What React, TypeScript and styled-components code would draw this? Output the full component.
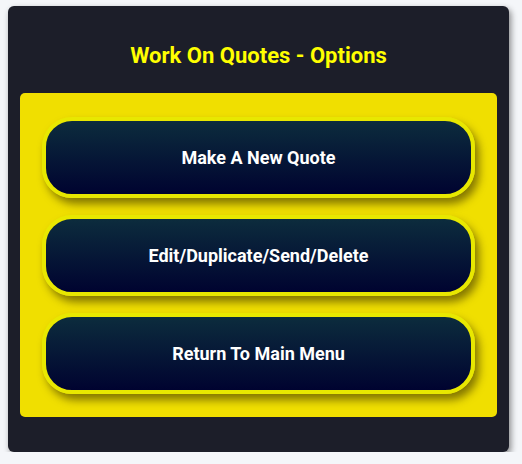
import React from "react";
import styled, { createGlobalStyle } from "styled-components";

const Global = createGlobalStyle`
  html, body {
    margin: 0;
    padding: 0;
    background: #f4f6f9;
  }
  body {
    padding: 6px 0 0 8px;
    font-family: Roboto, "Liberation Sans", Arial, sans-serif;
  }
`;

const Card = styled.div`
  width: 501px;
  height: 446px;
  box-sizing: border-box;
  background: #1c1e29;
  border-radius: 6px;
  padding: 0 12px 34px 12px;
  box-shadow: 2px 3px 6px rgba(0, 0, 0, 0.45);
  display: flex;
  flex-direction: column;
`;

const Title = styled.h1`
  margin: 0;
  height: 87px;
  display: flex;
  align-items: center;
  justify-content: center;
  font-size: 22px;
  font-weight: 700;
  color: #ffff00;
  padding-top: 12px;
  box-sizing: border-box;
`;

const Panel = styled.div`
  background: #f0df00;
  border-radius: 5px;
  padding: 24px 22px 23px 22px;
  display: flex;
  flex-direction: column;
  gap: 17px;
`;

const OptionButton = styled.button`
  height: 81px;
  width: 100%;
  box-sizing: border-box;
  border: 4px solid #e8e800;
  border-radius: 30px;
  background: linear-gradient(to bottom, #0c2c3d 0%, #000330 100%);
  color: #ffffff;
  font-family: Roboto, "Liberation Sans", Arial, sans-serif;
  font-size: 18px;
  font-weight: 700;
  cursor: pointer;
  box-shadow: 4px 6px 9px rgba(60, 50, 0, 0.6);
  display: flex;
  align-items: center;
  justify-content: center;
`;

const options = ["Make A New Quote", "Edit/Duplicate/Send/Delete", "Return To Main Menu"];

export default function App() {
  return (
    <>
      <Global />
      <Card>
        <Title>Work On Quotes - Options</Title>
        <Panel>
          {options.map((o) => (
            <OptionButton key={o}>{o}</OptionButton>
          ))}
        </Panel>
      </Card>
    </>
  );
}
